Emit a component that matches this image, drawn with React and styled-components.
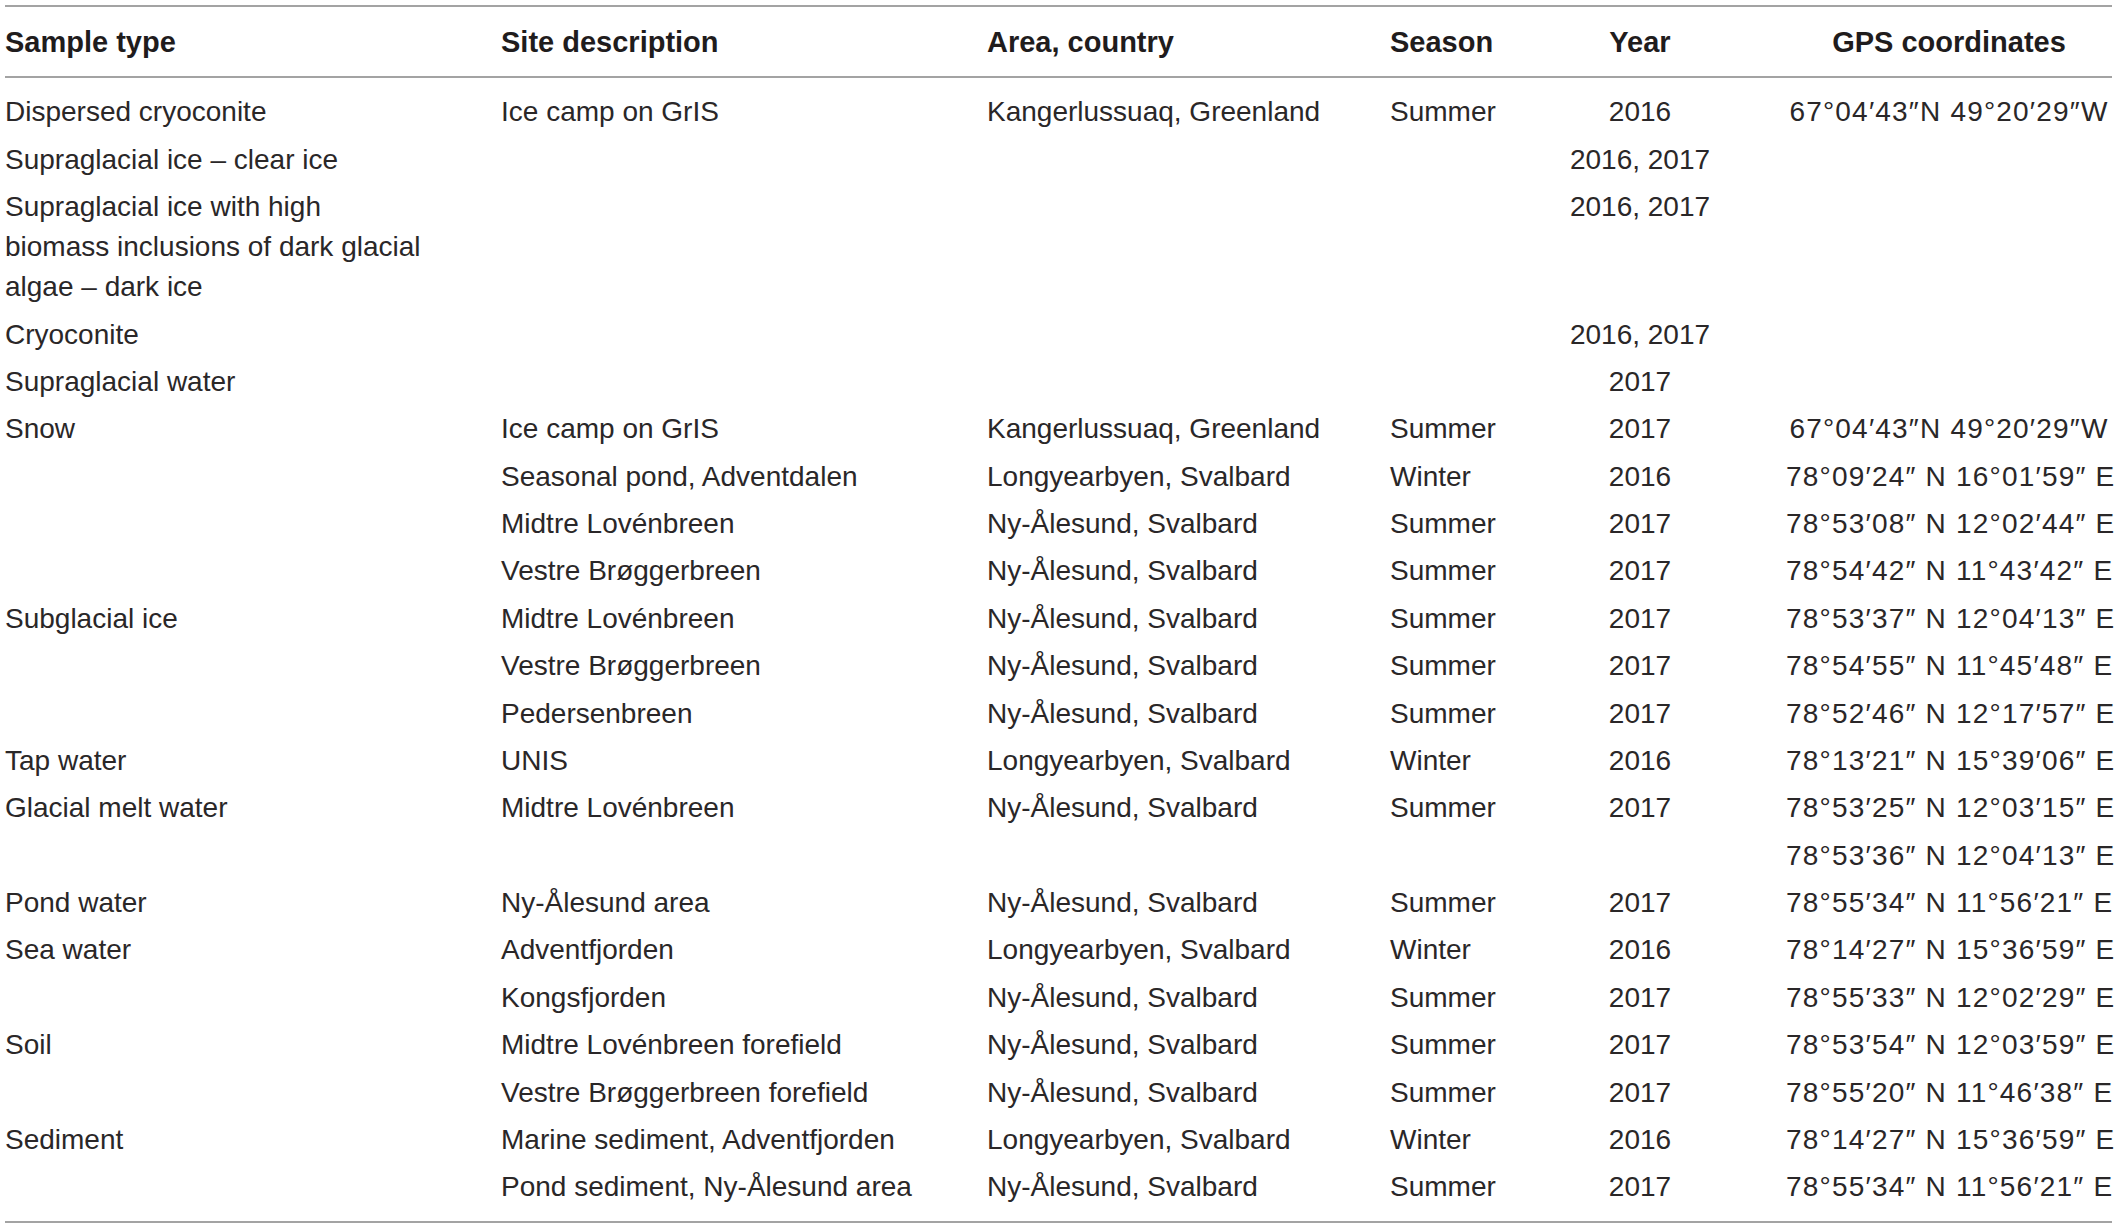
import React from "react";
import styled, { createGlobalStyle } from "styled-components";

// sample site table, plain grid rows so every row shares the same column template
const GlobalStyle = createGlobalStyle`
	html, body {
		margin: 0;
		padding: 0;
		background: #ffffff;
	}
	body {
		font-family: "Liberation Sans", Arial, "Helvetica Neue", sans-serif;
		color: #231f20;
	}
`;

const COLUMNS = "496px 486px 403px 140px 220px 362px";

const Page = styled.div`
	padding: 5px 6px 0 5px;
	width: 2107px;
`;

const Table = styled.div`
	display: flex;
	flex-direction: column;
	border-top: 2px solid #a3a3a3;
	border-bottom: 2px solid #a3a3a3;
`;

const HeadRow = styled.div`
	display: grid;
	grid-template-columns: ${COLUMNS};
	padding: 15px 0 14px;
	border-bottom: 2px solid #a3a3a3;
`;

const Body = styled.div`
	display: flex;
	flex-direction: column;
	padding: 10.7px 0 10.5px;
`;

const Row = styled.div`
	display: grid;
	grid-template-columns: ${COLUMNS};
	padding: 3.7px 0;
`;

const Cell = styled.div`
	font-size: ${(p) => (p.$head ? 29 : 28)}px;
	line-height: 40px;
	font-weight: ${(p) => (p.$head ? 700 : 400)};
	color: ${(p) => (p.$head ? "#1f1c1d" : "#2a2728")};
	text-align: ${(p) => p.$align || "left"};
	padding-left: ${(p) => p.$pl || 0}px;
	letter-spacing: ${(p) => (p.$wide && !p.$head ? "1.2px" : "normal")};
	white-space: nowrap;
`;

// per column alignment, the last one is offset so its content centres where the original does
const colProps = [
	{},
	{},
	{},
	{},
	{ $align: "center" },
	{ $align: "center", $pl: 36, $wide: true },
];

const headers = [
	"Sample type",
	"Site description",
	"Area, country",
	"Season",
	"Year",
	"GPS coordinates",
];

const GRL = "Kangerlussuaq, Greenland";
const LYB = "Longyearbyen, Svalbard";
const NYA = "Ny-Ålesund, Svalbard";

const rows = [
	["Dispersed cryoconite", "Ice camp on GrIS", GRL, "Summer", "2016", "67°04′43″N 49°20′29″W"],
	["Supraglacial ice – clear ice", "", "", "", "2016, 2017", ""],
	[
		["Supraglacial ice with high", "biomass inclusions of dark glacial", "algae – dark ice"],
		"",
		"",
		"",
		"2016, 2017",
		"",
	],
	["Cryoconite", "", "", "", "2016, 2017", ""],
	["Supraglacial water", "", "", "", "2017", ""],
	["Snow", "Ice camp on GrIS", GRL, "Summer", "2017", "67°04′43″N 49°20′29″W"],
	["", "Seasonal pond, Adventdalen", LYB, "Winter", "2016", "78°09′24″ N 16°01′59″ E"],
	["", "Midtre Lovénbreen", NYA, "Summer", "2017", "78°53′08″ N 12°02′44″ E"],
	["", "Vestre Brøggerbreen", NYA, "Summer", "2017", "78°54′42″ N 11°43′42″ E"],
	["Subglacial ice", "Midtre Lovénbreen", NYA, "Summer", "2017", "78°53′37″ N 12°04′13″ E"],
	["", "Vestre Brøggerbreen", NYA, "Summer", "2017", "78°54′55″ N 11°45′48″ E"],
	["", "Pedersenbreen", NYA, "Summer", "2017", "78°52′46″ N 12°17′57″ E"],
	["Tap water", "UNIS", LYB, "Winter", "2016", "78°13′21″ N 15°39′06″ E"],
	["Glacial melt water", "Midtre Lovénbreen", NYA, "Summer", "2017", "78°53′25″ N 12°03′15″ E"],
	["", "", "", "", "", "78°53′36″ N 12°04′13″ E"],
	["Pond water", "Ny-Ålesund area", NYA, "Summer", "2017", "78°55′34″ N 11°56′21″ E"],
	["Sea water", "Adventfjorden", LYB, "Winter", "2016", "78°14′27″ N 15°36′59″ E"],
	["", "Kongsfjorden", NYA, "Summer", "2017", "78°55′33″ N 12°02′29″ E"],
	["Soil", "Midtre Lovénbreen forefield", NYA, "Summer", "2017", "78°53′54″ N 12°03′59″ E"],
	["", "Vestre Brøggerbreen forefield", NYA, "Summer", "2017", "78°55′20″ N 11°46′38″ E"],
	["Sediment", "Marine sediment, Adventfjorden", LYB, "Winter", "2016", "78°14′27″ N 15°36′59″ E"],
	["", "Pond sediment, Ny-Ålesund area", NYA, "Summer", "2017", "78°55′34″ N 11°56′21″ E"],
];

const renderValue = (value) =>
	Array.isArray(value)
		? value.map((line, i) => <div key={i}>{line}</div>)
		: value;

export default function App() {
	return (
		<>
			<GlobalStyle />
			<Page>
				<Table>
					<HeadRow>
						{headers.map((h, i) => (
							<Cell key={h} $head {...colProps[i]}>
								{h}
							</Cell>
						))}
					</HeadRow>
					<Body>
						{rows.map((row, r) => (
							<Row key={r}>
								{row.map((value, c) => (
									<Cell key={c} {...colProps[c]}>
										{renderValue(value)}
									</Cell>
								))}
							</Row>
						))}
					</Body>
				</Table>
			</Page>
		</>
	);
}
